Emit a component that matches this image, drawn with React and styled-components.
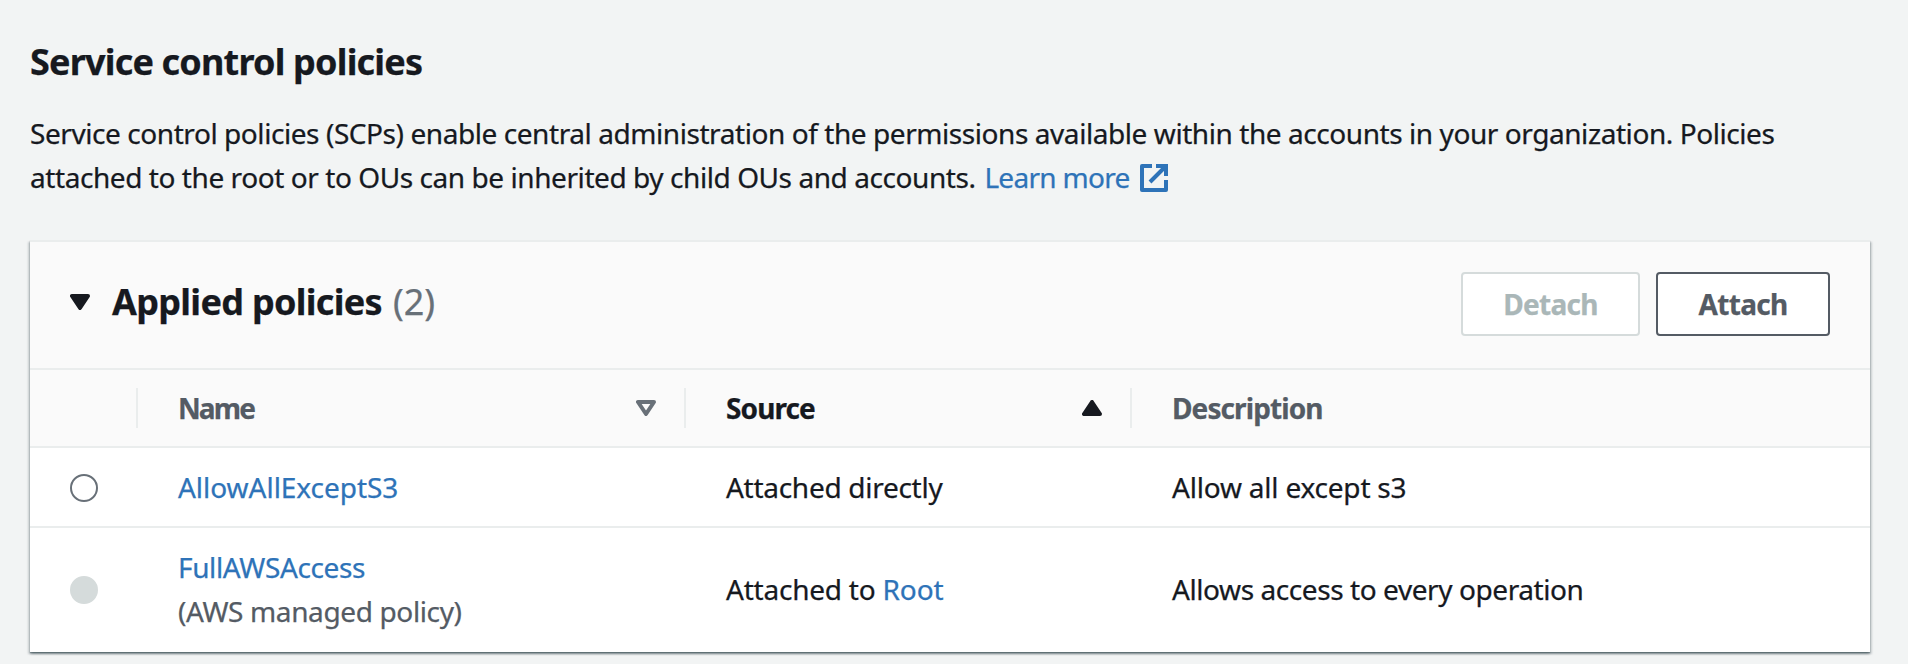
import React from 'react';
import styled, { createGlobalStyle } from 'styled-components';

const GlobalStyle = createGlobalStyle`
  * { box-sizing: border-box; }
  body {
    margin: 0;
    background: #f2f4f4;
    color: #16191f;
    font-family: "Noto Sans", sans-serif;
    font-size: 28px;
    line-height: 44px;
    letter-spacing: -0.43px;
    -webkit-text-stroke: 0.25px currentColor;
  }
`;

const Page = styled.main`
  height: 664px;
  padding: 40px 38px 0 30px;
  overflow: hidden;
`;

const Heading = styled.h1`
  margin: 0;
  font-size: 36px;
  line-height: 44px;
  font-weight: 700;
  letter-spacing: -0.82px;
`;

const Intro = styled.p`
  margin: 27px 0 41px;
  white-space: nowrap;
`;

const Link = styled.a`
  color: #2e73b8;
  text-decoration: none;
  letter-spacing: ${(p) => p.$spacing || '-0.43px'};
`;

const LearnMore = styled(Link)`
  margin-left: 2px;

  svg {
    margin-left: 10px;
    vertical-align: -4px;
  }
`;

const Panel = styled.section`
  width: 1840px;
  border-top: 2px solid #eaeded;
  background: #fff;
  box-shadow: 0 2px 2px 0 rgba(0, 28, 36, 0.3), 2px 2px 2px 0 rgba(0, 28, 36, 0.15),
    -2px 2px 2px 0 rgba(0, 28, 36, 0.15), 0 1px 1px 0 rgba(0, 28, 36, 0.25);
`;

const PanelHeader = styled.header`
  display: flex;
  align-items: flex-start;
  height: 128px;
  padding: 30px 40px 0;
  background: #fafafa;
  border-bottom: 2px solid #eaeded;
`;

const PanelTitle = styled.h2`
  display: flex;
  align-items: center;
  margin: 8px auto 0 0;
  font-size: 36px;
  line-height: 44px;
  font-weight: 700;
  letter-spacing: -0.7px;

  svg { margin-right: 22px; }
`;

const Count = styled.span`
  margin-left: 11px;
  color: #687078;
  font-weight: 400;
  letter-spacing: 0;
`;

const Button = styled.button`
  width: ${(p) => p.$width};
  height: 64px;
  margin-left: 16px;
  padding: 8px 0;
  border: 2px solid #545b64;
  border-radius: 4px;
  background: #fff;
  color: #545b64;
  font: inherit;
  font-weight: 700;
  letter-spacing: -0.7px;

  &:disabled {
    border-color: #d5dbdb;
    color: #aab7b8;
  }
`;

const Row = styled.div`
  display: grid;
  grid-template-columns: 108px 548px 446px 1fr;
  align-items: center;
  padding: 17px 0 ${(p) => (p.$last ? '19px' : '17px')};
  border-bottom: ${(p) => (p.$last ? '0' : '2px solid #eaeded')};
`;

const HeadRow = styled(Row)`
  height: 78px;
  padding: 0;
  background: #fafafa;
`;

const HeadCell = styled.div`
  display: flex;
  align-items: center;
  justify-content: space-between;
  height: 40px;
  padding: 0 28px 0 40px;
  border-right: ${(p) => (p.$last ? '0' : '2px solid #eaeded')};
  color: ${(p) => (p.$active ? '#16191f' : '#545b64')};
  font-weight: 700;
  letter-spacing: ${(p) => p.$spacing || '-0.9px'};
`;

const Cell = styled.div`
  padding-left: 40px;
  letter-spacing: ${(p) => p.$spacing || 'inherit'};
`;

const Note = styled.div`
  color: #545b64;
  letter-spacing: -0.37px;
`;

const Radio = styled.span`
  display: block;
  width: 28px;
  height: 28px;
  margin-top: 2px;
  border: 2px solid ${(p) => (p.$disabled ? '#d5dbdb' : '#687078')};
  border-radius: 50%;
  background: ${(p) => (p.$disabled ? '#d5dbdb' : '#fff')};
`;

const ExternalIcon = () => (
  <svg width="28" height="28" viewBox="0 0 28 28" fill="none" stroke="#2e73b8" strokeWidth="4">
    <path d="M12 2H2v24h24V16" strokeLinejoin="round" />
    <path d="M16 2h10v10M26 2L10 18" />
  </svg>
);

const Triangle = ({ up, hollow }) => (
  <svg width="20" height="16" viewBox="0 0 20 16">
    <path
      d={up ? 'M10 2L2 14h16z' : 'M10 14L2 2h16z'}
      fill={hollow ? 'none' : '#16191f'}
      stroke={hollow ? '#687078' : '#16191f'}
      strokeWidth="4"
      strokeLinejoin="round"
    />
  </svg>
);

export default function App() {
  return (
    <Page>
      <GlobalStyle />
      <Heading>Service control policies</Heading>
      <Intro>
        Service control policies (SCPs) enable central administration of the permissions available
        within the accounts in your organization. Policies
        <br />
        attached to the root or to OUs can be inherited by child OUs and accounts.{' '}
        <LearnMore $spacing="-0.7px">
          Learn more
          <ExternalIcon />
        </LearnMore>
      </Intro>
      <Panel>
        <PanelHeader>
          <PanelTitle>
            <Triangle />
            Applied policies <Count>(2)</Count>
          </PanelTitle>
          <Button $width="179px" disabled>Detach</Button>
          <Button $width="174px">Attach</Button>
        </PanelHeader>
        <HeadRow>
          <HeadCell />
          <HeadCell $spacing="-1.9px">
            Name
            <Triangle hollow />
          </HeadCell>
          <HeadCell $active>
            Source
            <Triangle up />
          </HeadCell>
          <HeadCell $last>Description</HeadCell>
        </HeadRow>
        <Row>
          <Cell><Radio /></Cell>
          <Cell><Link $spacing="-0.03px">AllowAllExceptS3</Link></Cell>
          <Cell $spacing="-0.28px">Attached directly</Cell>
          <Cell $spacing="-0.2px">Allow all except s3</Cell>
        </Row>
        <Row $last>
          <Cell><Radio $disabled /></Cell>
          <Cell>
            <Link $spacing="-0.37px">FullAWSAccess</Link>
            <Note>(AWS managed policy)</Note>
          </Cell>
          <Cell $spacing="-0.22px">
            Attached to <Link $spacing="-0.1px">Root</Link>
          </Cell>
          <Cell $spacing="-0.42px">Allows access to every operation</Cell>
        </Row>
      </Panel>
    </Page>
  );
}
